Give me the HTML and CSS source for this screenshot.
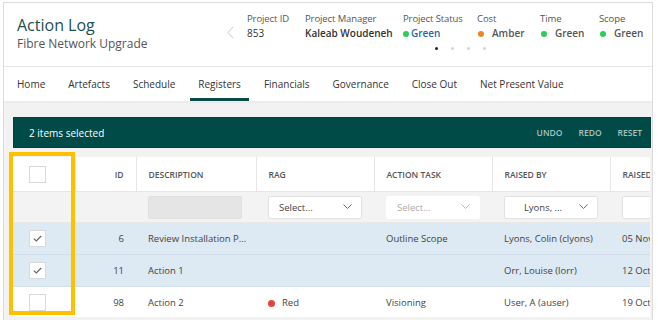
FILE: index.html
```html
<!DOCTYPE html>
<html lang="en">
<head>
    <meta charset="UTF-8">
    <meta name="viewport" content="width=device-width, initial-scale=1.0">
    <title>Action Log</title>
    <link rel="stylesheet" href="styles.css">
</head>
<body>

<div class="page">

    <!-- Project header -->
    <div class="head">
        <div class="title">
            <h1>Action Log</h1>
            <p>Fibre Network Upgrade</p>
        </div>
        <div class="summary">
            <svg class="prev" width="7" height="13" viewBox="0 0 7 13"><polyline points="6,1 1,6.5 6,12" fill="none" stroke="#c8c8c8" stroke-width="1"/></svg>
            <div>
                <div class="facts">
                    <div class="fact"><span class="label">Project ID</span><span class="value plain">853</span></div>
                    <div class="fact"><span class="label">Project Manager</span><span class="value">Kaleab Woudeneh</span></div>
                    <div class="fact"><span class="label">Project Status</span><span class="value status"><i class="dot green"></i>Green</span></div>
                    <div class="fact"><span class="label">Cost</span><span class="value rag"><i class="dot amber"></i>Amber</span></div>
                    <div class="fact"><span class="label">Time</span><span class="value rag"><i class="dot green"></i>Green</span></div>
                    <div class="fact"><span class="label">Scope</span><span class="value rag"><i class="dot green"></i>Green</span></div>
                </div>
                <div class="pager"><i class="on"></i><i></i><i></i><i></i></div>
            </div>
        </div>
    </div>

    <!-- Tabs -->
    <div class="tabs">
        <a href="#">Home</a>
        <a href="#">Artefacts</a>
        <a href="#">Schedule</a>
        <a href="#" class="active">Registers</a>
        <a href="#">Financials</a>
        <a href="#">Governance</a>
        <a href="#">Close Out</a>
        <a href="#">Net Present Value</a>
    </div>

    <div class="content">
        <div class="toolbar">
            <span class="count">2 items selected</span>
            <div class="actions">
                <button>UNDO</button>
                <button>REDO</button>
                <button>RESET</button>
            </div>
        </div>

        <div class="grid-wrap">
            <div class="grid-clip">
                <table class="grid">
                    <colgroup>
                        <col style="width:62px"><col style="width:61px"><col style="width:120px"><col style="width:118px">
                        <col style="width:118px"><col style="width:118px"><col style="width:120px">
                    </colgroup>
                    <thead>
                        <tr class="heads">
                            <th class="check"><span class="box"></span></th>
                            <th class="num">ID</th>
                            <th>Description</th>
                            <th>RAG</th>
                            <th>Action Task</th>
                            <th>Raised By</th>
                            <th>Raised Date</th>
                        </tr>
                        <tr class="filters">
                            <td></td>
                            <td></td>
                            <td><div class="field disabled"></div></td>
                            <td><div class="field select">Select...<svg width="9" height="6" viewBox="0 0 9 6"><polyline points="0.5,0.5 4.5,4.5 8.5,0.5" fill="none" stroke="#666" stroke-width="1"/></svg></div></td>
                            <td><div class="field select muted">Select...<svg width="9" height="6" viewBox="0 0 9 6"><polyline points="0.5,0.5 4.5,4.5 8.5,0.5" fill="none" stroke="#bbb" stroke-width="1"/></svg></div></td>
                            <td><div class="field select centered"><span>Lyons, ...</span><svg width="9" height="6" viewBox="0 0 9 6"><polyline points="0.5,0.5 4.5,4.5 8.5,0.5" fill="none" stroke="#666" stroke-width="1"/></svg></div></td>
                            <td><div class="field select"></div></td>
                        </tr>
                    </thead>
                    <tbody>
                        <tr class="picked">
                            <td class="check"><span class="box"><svg width="9" height="7" viewBox="0 0 9 7"><polyline points="0.8,3.6 3.3,6 8.2,1" fill="none" stroke="#666" stroke-width="1.2"/></svg></span></td>
                            <td class="num">6</td>
                            <td>Review Installation P...</td>
                            <td></td>
                            <td>Outline Scope</td>
                            <td>Lyons, Colin (clyons)</td>
                            <td>05 Nov 2019</td>
                        </tr>
                        <tr class="picked">
                            <td class="check"><span class="box"><svg width="9" height="7" viewBox="0 0 9 7"><polyline points="0.8,3.6 3.3,6 8.2,1" fill="none" stroke="#666" stroke-width="1.2"/></svg></span></td>
                            <td class="num">11</td>
                            <td>Action 1</td>
                            <td></td>
                            <td></td>
                            <td>Orr, Louise (lorr)</td>
                            <td>12 Oct 2019</td>
                        </tr>
                        <tr>
                            <td class="check"><span class="box"></span></td>
                            <td class="num">98</td>
                            <td>Action 2</td>
                            <td><i class="dot red"></i>Red</td>
                            <td>Visioning</td>
                            <td>User, A (auser)</td>
                            <td>19 Oct 2019</td>
                        </tr>
                    </tbody>
                </table>
            </div>
            <!-- callout around the checkbox column -->
            <div class="highlight"></div>
        </div>
    </div>

</div>

</body>
</html>
```

FILE: styles.css
```css
body {
    margin: 0;
    font-family: "Open Sans", "Noto Sans", sans-serif;
    color: #333;
    background: #fff;
}

.page {
    margin: 2px 5px 0 3px;
    height: 318px;
    border: 1px solid #dcdcdc;
    border-bottom: none;
    box-sizing: border-box;
    display: flex;
    flex-direction: column;
    overflow: hidden;
}

/* Header */
.head {
    height: 63px;
    display: flex;
    flex-shrink: 0;
}

.title {
    width: 210px;
    padding: 12px 0 0 13px;
}

.title h1 {
    margin: 0;
    font-size: 16px;
    line-height: 20px;
    font-weight: 400;
    color: #1f4f4c;
}

.title p {
    margin: 0;
    font-size: 12px;
    line-height: 18px;
    color: #555;
}

.summary {
    display: flex;
    padding-top: 9px;
}

.prev {
    margin: 14px 13px 0 0;
}

.facts {
    display: grid;
    grid-template-columns: 58px 98px 74px 63px 59px auto;
}

.fact {
    display: flex;
    flex-direction: column;
}

.label {
    font-size: 9.5px;
    line-height: 14px;
    color: #555;
    letter-spacing: -0.1px;
}

.value {
    font-size: 10px;
    line-height: 15px;
    font-weight: 600;
    color: #333;
    display: flex;
    align-items: center;
}

.value.plain {
    font-weight: 400;
}

.value.status {
    color: #1c6ba3;
}

.value.rag {
    color: #555;
}

.dot {
    width: 6px;
    height: 6px;
    border-radius: 50%;
    display: inline-block;
    margin-right: 2px;
}

.value.rag .dot {
    margin: 0 8px 0 1px;
}

.dot.green { background: #2ecc5f; }
.dot.amber { background: #f0862a; }
.dot.red { background: #e8423a; }

.pager {
    display: flex;
    gap: 13px;
    margin: 6px 0 0 188px;
}

.pager i {
    width: 3px;
    height: 3px;
    border-radius: 50%;
    background: #d6d6d6;
}

.pager i.on {
    background: #222;
}

/* Tabs */
.tabs {
    display: flex;
    height: 34px;
    flex-shrink: 0;
    padding-left: 5px;
    border-top: 1px solid #e6e6e6;
    border-bottom: 2px solid #ececec;
}

.tabs a {
    display: flex;
    align-items: center;
    padding: 3px 8px 0;
    margin-right: 7px;
    font-size: 10px;
    color: #333;
    text-decoration: none;
    border-bottom: 3px solid transparent;
}

.tabs a.active {
    border-bottom-color: #0b4a47;
}

/* Register area */
.content {
    flex: 1;
    background: #f2f2f2;
    padding: 14px 1px 0 9px;
}

.toolbar {
    height: 31px;
    box-sizing: border-box;
    background: #004b48;
    border: 1px solid #00403d;
    display: flex;
    align-items: center;
    justify-content: space-between;
    padding: 0 8px 0 15px;
}

.count {
    color: #fff;
    font-size: 10px;
}

.actions {
    display: flex;
    gap: 16px;
}

.actions button {
    background: none;
    border: none;
    padding: 0;
    font-family: inherit;
    font-size: 8.5px;
    font-weight: 600;
    color: #a7c2bf;
    cursor: pointer;
}

.grid-wrap {
    position: relative;
    margin-top: 9px;
    width: 637px;
}

.grid-clip {
    overflow: hidden;
    height: 160px;
}

.grid {
    border-collapse: collapse;
    table-layout: fixed;
    width: 717px;
    font-size: 9.5px;
}

.grid th,
.grid td {
    padding: 0 0 0 12px;
    text-align: left;
    white-space: nowrap;
    overflow: hidden;
    color: #444;
}

.heads th {
    height: 34px;
    background: #fff;
    font-size: 8.5px;
    font-weight: 600;
    color: #555;
    text-transform: uppercase;
    border-left: 1px solid #e6e6e6;
    border-bottom: 1px solid #e6e6e6;
}

.heads th:first-child {
    border-left: none;
}

.filters td {
    height: 30px;
    background: #f3f3f3;
    border-bottom: 1px solid #e8e8e8;
}

.grid .num {
    text-align: right;
    padding: 0 12px 0 0;
}

.grid .check {
    padding-left: 16px;
}

.box {
    width: 17px;
    height: 17px;
    box-sizing: border-box;
    border: 1px solid #d9d9d9;
    background: #fff;
    display: flex;
    align-items: center;
    justify-content: center;
}

.field {
    width: 94px;
    height: 23px;
    box-sizing: border-box;
    border-radius: 2px;
}

.field.disabled {
    background: #e5e5e5;
    border: 1px solid #e0e0e0;
}

.field.select {
    background: #fff;
    border: 1px solid #e2e2e2;
    display: flex;
    align-items: center;
    justify-content: space-between;
    padding: 0 9px 0 10px;
    font-size: 9.5px;
    color: #444;
}

.field.select.muted {
    border-color: #fff;
    color: #aaa;
}

.field.select.centered span {
    flex: 1;
    text-align: center;
}

.field.select.centered svg {
    margin-left: 8px;
}

tbody td {
    height: 31px;
    background: #fff;
    border-bottom: 1px solid #e6e6e6;
}

tbody tr.picked td {
    background: #dde9f3;
    border-bottom-color: #d2dfea;
}

tbody .dot {
    margin-right: 7px;
    width: 7px;
    height: 7px;
    vertical-align: -0.5px;
}

.highlight {
    position: absolute;
    left: -4px;
    top: -5px;
    width: 66px;
    height: 163px;
    box-sizing: border-box;
    border: 4px solid #ffc000;
}
```
